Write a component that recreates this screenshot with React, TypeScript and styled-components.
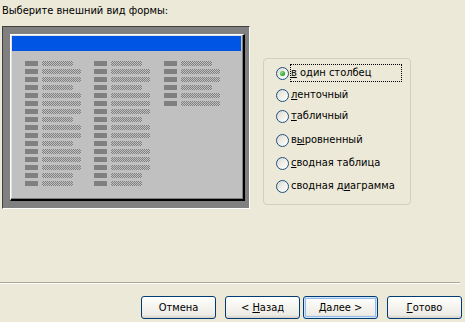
import React from 'react';
import styled, { createGlobalStyle } from 'styled-components';

const GlobalStyle = createGlobalStyle`
  html, body { margin: 0; padding: 0; background: #ece9d8; }
  body {
    font-family: "DejaVu Sans Condensed", "Liberation Sans", sans-serif;
    font-size: 11px;
    color: #000;
  }
`;

const Page = styled.div`
  width: 465px;
  height: 322px;
  box-sizing: border-box;
  display: flex;
  flex-direction: column;
  padding-top: 4px;
  overflow: hidden;
  background: #ece9d8;
`;

const Title = styled.div`
  padding-left: 2px;
  height: 13px;
  line-height: 13px;
  white-space: nowrap;
`;

const Content = styled.div`
  display: flex;
  align-items: flex-start;
  margin-top: 9px;
  padding-left: 2px;
`;

const PreviewFrame = styled.div`
  width: 248px;
  height: 183px;
  box-sizing: border-box;
  background: #808080;
  border-style: solid;
  border-width: 1px;
  border-color: #404040 #ffffff #ffffff #404040;
  padding: 7px 4px 7px 7px;
`;

const FormPanel = styled.div`
  width: 235px;
  height: 167px;
  box-sizing: border-box;
  background: #c0c0c0;
  border-style: solid;
  border-width: 1px 2px 2px 1px;
  border-color: #ffffff #000000 #000000 #ffffff;
  box-shadow: inset -1px -1px 0 #808080, inset 1px 1px 0 #dfdfdf;
  display: flex;
  flex-direction: column;
`;

const FormCaption = styled.div`
  height: 15px;
  margin: 1px 2px 0 1px;
  background: #0055e5;
`;

const FormBody = styled.div`
  display: grid;
  grid-template-columns: 69px 70px auto;
  align-items: start;
  padding: 10px 0 0 14px;
`;

const FieldColumn = styled.div`
  display: flex;
  flex-direction: column;
  gap: 3px;
`;

const FieldRow = styled.div`
  display: flex;
  gap: 4px;
  height: 5px;
`;

const FieldLabel = styled.div`
  width: 13px;
  height: 5px;
  background: #808080;
`;

const FieldValue = styled.div<{ $long: boolean }>`
  width: ${p => (p.$long ? 39 : 31)}px;
  height: 5px;
  background-image: repeating-conic-gradient(#808080 0% 25%, #c0c0c0 0% 50%);
  background-size: 2px 2px;
`;

const GroupBox = styled.div`
  margin-left: 13px;
  margin-top: 32px;
  width: 148px;
  height: 147px;
  box-sizing: border-box;
  border: 1px solid #d0d0bf;
  border-radius: 4px;
  padding: 5px 0 0 12px;
  display: flex;
  flex-direction: column;
`;

const Option = styled.div<{ $offset: number }>`
  display: flex;
  align-items: center;
  height: 18px;
  margin-top: ${p => p.$offset}px;
`;

const RadioCircle = styled.span<{ $checked?: boolean }>`
  width: 13px;
  height: 13px;
  box-sizing: border-box;
  border-radius: 50%;
  border: 1px solid #1c5180;
  background: linear-gradient(135deg, #dcd9cf 0%, #eeede6 45%, #ffffff 100%);
  display: flex;
  align-items: center;
  justify-content: center;
  flex-shrink: 0;
  &::after {
    content: '';
    width: 5px;
    height: 5px;
    border-radius: 50%;
    background: radial-gradient(circle at 35% 35%, #8ee08e 0%, #21a121 70%);
    display: ${p => (p.$checked ? 'block' : 'none')};
  }
`;

const OptionLabel = styled.span<{ $focused?: boolean }>`
  margin-left: 1px;
  height: 18px;
  box-sizing: border-box;
  line-height: 16px;
  white-space: nowrap;
  border: 1px dotted ${p => (p.$focused ? '#000' : 'transparent')};
  width: ${p => (p.$focused ? '112px' : 'auto')};
`;

const Key = styled.span`
  text-decoration: underline;
`;

const Footer = styled.div`
  margin-top: auto;
  display: flex;
  flex-direction: column;
`;

const Separator = styled.div`
  width: 460px;
  height: 1px;
  background: #aca899;
  border-bottom: 1px solid #ffffff;
`;

const ButtonRow = styled.div`
  display: flex;
  justify-content: flex-end;
  gap: 9px;
  margin-top: 12px;
  padding: 0 3px 3px 0;
`;

const NavGroup = styled.div`
  display: flex;
  gap: 3px;
`;

const Button = styled.button<{ $default?: boolean }>`
  width: 75px;
  height: 23px;
  box-sizing: border-box;
  padding: 0;
  margin: 0;
  font: inherit;
  color: #000;
  border: 1px solid #003c74;
  border-radius: 3px;
  background: linear-gradient(180deg, #ffffff 0%, #f4f3ee 50%, #ecebe6 85%, #d6d0c5 100%);
  box-shadow: ${p =>
    p.$default
      ? 'inset 0 0 0 1px #cee7ff, inset 0 0 0 2px #98b8ea'
      : 'none'};
  display: flex;
  align-items: center;
  justify-content: center;
  line-height: 13px;
`;

const patternMain = [false, true, true, false, true, true, true, false, true, true, false, true, true, true, false, false];
const patternThird = [false, true, true, false, true, true];

const Column: React.FC<{ rows: boolean[] }> = ({ rows }) => (
  <FieldColumn>
    {rows.map((long, i) => (
      <FieldRow key={i}>
        <FieldLabel />
        <FieldValue $long={long} />
      </FieldRow>
    ))}
  </FieldColumn>
);

const options: { pre: string; key: string; post: string; offset: number }[] = [
  { pre: '', key: 'в', post: ' один столбец', offset: 0 },
  { pre: '', key: 'л', post: 'енточный', offset: 4 },
  { pre: '', key: 'т', post: 'абличный', offset: 3 },
  { pre: 'в', key: 'ы', post: 'ровненный', offset: 6 },
  { pre: '', key: 'с', post: 'водная таблица', offset: 5 },
  { pre: 'сводная д', key: 'и', post: 'аграмма', offset: 5 },
];

export default function App() {
  return (
    <>
      <GlobalStyle />
      <Page>
        <Title>Выберите внешний вид формы:</Title>
        <Content>
          <PreviewFrame>
            <FormPanel>
              <FormCaption />
              <FormBody>
                <Column rows={patternMain} />
                <Column rows={patternMain} />
                <Column rows={patternThird} />
              </FormBody>
            </FormPanel>
          </PreviewFrame>
          <GroupBox>
            {options.map((o, i) => (
              <Option key={i} $offset={o.offset}>
                <RadioCircle $checked={i === 0} />
                <OptionLabel $focused={i === 0}>
                  {o.pre}
                  <Key>{o.key}</Key>
                  {o.post}
                </OptionLabel>
              </Option>
            ))}
          </GroupBox>
        </Content>
        <Footer>
          <Separator />
          <ButtonRow>
            <Button>Отмена</Button>
            <NavGroup>
              <Button>
                &lt;&nbsp;<Key>Н</Key>азад
              </Button>
              <Button $default>
                <Key>Д</Key>алее&nbsp;&gt;
              </Button>
            </NavGroup>
            <Button>
              <Key>Г</Key>отово
            </Button>
          </ButtonRow>
        </Footer>
      </Page>
    </>
  );
}
